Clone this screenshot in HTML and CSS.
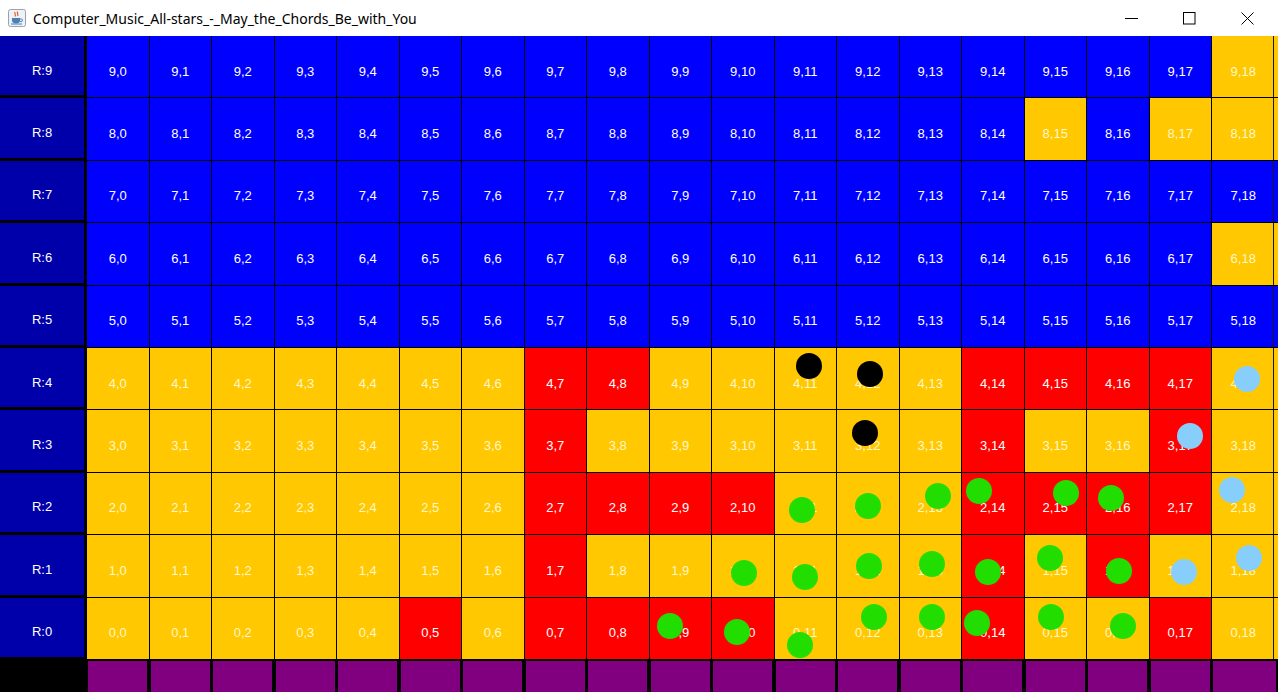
FILE: index.html
```html
<!DOCTYPE html>
<html lang="en">
<head>
	<meta charset="UTF-8">
	<title>Computer_Music_All-stars_-_May_the_Chords_Be_with_You</title>
	<link rel="stylesheet" href="styles.css">
</head>
<body>
	<div id="titlebar">
		<svg class="app-icon" width="18" height="18" viewBox="0 0 18 18">
			<rect x="0.5" y="0.5" width="17" height="17" rx="2" fill="#eef1f5" stroke="#9aa3ad"/>
			<path d="M7 3c-1 1.5 1.5 2.5 0 4.5M9.5 2.5c-1 1.5 1.5 2.5 0 4.5" stroke="#e0602a" stroke-width="1.2" fill="none"/>
			<path d="M4 9h8v2.5c0 2-1.8 3-4 3s-4-1-4-3z" fill="#4a7fb8"/>
			<path d="M12 10h1.2a1.3 1.3 0 0 1 0 2.6H11.6" stroke="#4a7fb8" stroke-width="1" fill="none"/>
			<path d="M3 15h11" stroke="#4a7fb8" stroke-width="1"/>
		</svg>
		<span class="title">Computer_Music_All-stars_-_May_the_Chords_Be_with_You</span>
		<div class="controls">
			<span><svg width="13" height="13" viewBox="0 0 13 13"><path d="M0 6.5h13" stroke="#000" stroke-width="1"/></svg></span>
			<span><svg width="13" height="13" viewBox="0 0 13 13"><rect x="0.5" y="0.5" width="11.5" height="11.5" fill="none" stroke="#000" stroke-width="1"/></svg></span>
			<span><svg width="13" height="13" viewBox="0 0 13 13"><path d="M0.5 0.5l12 12M12.5 0.5l-12 12" stroke="#000" stroke-width="1"/></svg></span>
		</div>
	</div>

	<div id="board">
		<div class="lbl">R:9</div>
		<div class="c b">9,0</div><div class="c b">9,1</div><div class="c b">9,2</div><div class="c b">9,3</div><div class="c b">9,4</div>
		<div class="c b">9,5</div><div class="c b">9,6</div><div class="c b">9,7</div><div class="c b">9,8</div><div class="c b">9,9</div>
		<div class="c b">9,10</div><div class="c b">9,11</div><div class="c b">9,12</div><div class="c b">9,13</div><div class="c b">9,14</div>
		<div class="c b">9,15</div><div class="c b">9,16</div><div class="c b">9,17</div><div class="c y">9,18</div>

		<div class="lbl">R:8</div>
		<div class="c b">8,0</div><div class="c b">8,1</div><div class="c b">8,2</div><div class="c b">8,3</div><div class="c b">8,4</div>
		<div class="c b">8,5</div><div class="c b">8,6</div><div class="c b">8,7</div><div class="c b">8,8</div><div class="c b">8,9</div>
		<div class="c b">8,10</div><div class="c b">8,11</div><div class="c b">8,12</div><div class="c b">8,13</div><div class="c b">8,14</div>
		<div class="c y">8,15</div><div class="c b">8,16</div><div class="c y">8,17</div><div class="c y">8,18</div>

		<div class="lbl">R:7</div>
		<div class="c b">7,0</div><div class="c b">7,1</div><div class="c b">7,2</div><div class="c b">7,3</div><div class="c b">7,4</div>
		<div class="c b">7,5</div><div class="c b">7,6</div><div class="c b">7,7</div><div class="c b">7,8</div><div class="c b">7,9</div>
		<div class="c b">7,10</div><div class="c b">7,11</div><div class="c b">7,12</div><div class="c b">7,13</div><div class="c b">7,14</div>
		<div class="c b">7,15</div><div class="c b">7,16</div><div class="c b">7,17</div><div class="c b">7,18</div>

		<div class="lbl">R:6</div>
		<div class="c b">6,0</div><div class="c b">6,1</div><div class="c b">6,2</div><div class="c b">6,3</div><div class="c b">6,4</div>
		<div class="c b">6,5</div><div class="c b">6,6</div><div class="c b">6,7</div><div class="c b">6,8</div><div class="c b">6,9</div>
		<div class="c b">6,10</div><div class="c b">6,11</div><div class="c b">6,12</div><div class="c b">6,13</div><div class="c b">6,14</div>
		<div class="c b">6,15</div><div class="c b">6,16</div><div class="c b">6,17</div><div class="c y">6,18</div>

		<div class="lbl">R:5</div>
		<div class="c b">5,0</div><div class="c b">5,1</div><div class="c b">5,2</div><div class="c b">5,3</div><div class="c b">5,4</div>
		<div class="c b">5,5</div><div class="c b">5,6</div><div class="c b">5,7</div><div class="c b">5,8</div><div class="c b">5,9</div>
		<div class="c b">5,10</div><div class="c b">5,11</div><div class="c b">5,12</div><div class="c b">5,13</div><div class="c b">5,14</div>
		<div class="c b">5,15</div><div class="c b">5,16</div><div class="c b">5,17</div><div class="c b">5,18</div>

		<div class="lbl">R:4</div>
		<div class="c y">4,0</div><div class="c y">4,1</div><div class="c y">4,2</div><div class="c y">4,3</div><div class="c y">4,4</div>
		<div class="c y">4,5</div><div class="c y">4,6</div><div class="c r">4,7</div><div class="c r">4,8</div><div class="c y">4,9</div>
		<div class="c y">4,10</div><div class="c y">4,11</div><div class="c y">4,12</div><div class="c y">4,13</div><div class="c r">4,14</div>
		<div class="c r">4,15</div><div class="c r">4,16</div><div class="c r">4,17</div><div class="c y">4,18</div>

		<div class="lbl">R:3</div>
		<div class="c y">3,0</div><div class="c y">3,1</div><div class="c y">3,2</div><div class="c y">3,3</div><div class="c y">3,4</div>
		<div class="c y">3,5</div><div class="c y">3,6</div><div class="c r">3,7</div><div class="c y">3,8</div><div class="c y">3,9</div>
		<div class="c y">3,10</div><div class="c y">3,11</div><div class="c y">3,12</div><div class="c y">3,13</div><div class="c r">3,14</div>
		<div class="c y">3,15</div><div class="c y">3,16</div><div class="c r">3,17</div><div class="c y">3,18</div>

		<div class="lbl">R:2</div>
		<div class="c y">2,0</div><div class="c y">2,1</div><div class="c y">2,2</div><div class="c y">2,3</div><div class="c y">2,4</div>
		<div class="c y">2,5</div><div class="c y">2,6</div><div class="c r">2,7</div><div class="c r">2,8</div><div class="c r">2,9</div>
		<div class="c r">2,10</div><div class="c y">2,11</div><div class="c y">2,12</div><div class="c y">2,13</div><div class="c r">2,14</div>
		<div class="c r">2,15</div><div class="c r">2,16</div><div class="c r">2,17</div><div class="c y">2,18</div>

		<div class="lbl">R:1</div>
		<div class="c y">1,0</div><div class="c y">1,1</div><div class="c y">1,2</div><div class="c y">1,3</div><div class="c y">1,4</div>
		<div class="c y">1,5</div><div class="c y">1,6</div><div class="c r">1,7</div><div class="c y">1,8</div><div class="c y">1,9</div>
		<div class="c y">1,10</div><div class="c y">1,11</div><div class="c y">1,12</div><div class="c y">1,13</div><div class="c r">1,14</div>
		<div class="c y">1,15</div><div class="c r">1,16</div><div class="c y">1,17</div><div class="c y">1,18</div>

		<div class="lbl">R:0</div>
		<div class="c y">0,0</div><div class="c y">0,1</div><div class="c y">0,2</div><div class="c y">0,3</div><div class="c y">0,4</div>
		<div class="c r">0,5</div><div class="c y">0,6</div><div class="c r">0,7</div><div class="c r">0,8</div><div class="c r">0,9</div>
		<div class="c r">0,10</div><div class="c y">0,11</div><div class="c y">0,12</div><div class="c y">0,13</div><div class="c r">0,14</div>
		<div class="c y">0,15</div><div class="c y">0,16</div><div class="c r">0,17</div><div class="c y">0,18</div>

		<div class="foot"></div>
		<div class="pad"><i></i></div><div class="pad"><i></i></div><div class="pad"><i></i></div><div class="pad"><i></i></div><div class="pad"><i></i></div>
		<div class="pad"><i></i></div><div class="pad"><i></i></div><div class="pad"><i></i></div><div class="pad"><i></i></div><div class="pad"><i></i></div>
		<div class="pad"><i></i></div><div class="pad"><i></i></div><div class="pad"><i></i></div><div class="pad"><i></i></div><div class="pad"><i></i></div>
		<div class="pad"><i></i></div><div class="pad"><i></i></div><div class="pad"><i></i></div><div class="pad"><i></i></div>

		<div id="dots">
			<!-- black -->
			<span class="dot k" style="left:796px;top:317px"></span>
			<span class="dot k" style="left:857px;top:325px"></span>
			<span class="dot k" style="left:852px;top:384px"></span>
			<!-- light blue -->
			<span class="dot sky" style="left:1234px;top:330px"></span>
			<span class="dot sky" style="left:1177px;top:387px"></span>
			<span class="dot sky" style="left:1219px;top:441px"></span>
			<span class="dot sky" style="left:1236px;top:509px"></span>
			<span class="dot sky" style="left:1171px;top:523px"></span>
			<!-- green -->
			<span class="dot g" style="left:789px;top:461px"></span>
			<span class="dot g" style="left:855px;top:457px"></span>
			<span class="dot g" style="left:925px;top:447px"></span>
			<span class="dot g" style="left:966px;top:442px"></span>
			<span class="dot g" style="left:1053px;top:444px"></span>
			<span class="dot g" style="left:1098px;top:449px"></span>
			<span class="dot g" style="left:731px;top:524px"></span>
			<span class="dot g" style="left:792px;top:528px"></span>
			<span class="dot g" style="left:856px;top:517px"></span>
			<span class="dot g" style="left:919px;top:515px"></span>
			<span class="dot g" style="left:975px;top:523px"></span>
			<span class="dot g" style="left:1037px;top:509px"></span>
			<span class="dot g" style="left:1106px;top:522px"></span>
			<span class="dot g" style="left:657px;top:577px"></span>
			<span class="dot g" style="left:724px;top:583px"></span>
			<span class="dot g" style="left:787px;top:596px"></span>
			<span class="dot g" style="left:861px;top:568px"></span>
			<span class="dot g" style="left:919px;top:568px"></span>
			<span class="dot g" style="left:964px;top:574px"></span>
			<span class="dot g" style="left:1038px;top:568px"></span>
			<span class="dot g" style="left:1110px;top:577px"></span>
		</div>
	</div>
</body>
</html>
```

FILE: styles.css
```css
*{
	margin:0;
	padding:0;
	box-sizing:border-box;
}
body{
	width:1278px;
	height:692px;
	overflow:hidden;
	background:#fff;
	font-family:"Liberation Sans",Arial,sans-serif;
}
#titlebar{
	display:flex;
	align-items:center;
	height:36px;
	background:#fff;
}
.app-icon{
	margin-left:8px;
}
.title{
	margin-left:7px;
	font-family:"Noto Sans","Segoe UI",sans-serif;
	font-size:14px;
	color:#000;
}
.controls{
	display:flex;
	margin-left:auto;
	margin-right:2px;
}
.controls span{
	display:flex;
	align-items:center;
	justify-content:center;
	width:58px;
	height:36px;
}
#board{
	position:relative;
	display:grid;
	grid-template-columns:87px repeat(18,62.5px) 1fr;
	grid-template-rows:repeat(10,62.4px) 40px;
	background:#000;
}
.lbl{
	display:flex;
	align-items:center;
	justify-content:center;
	padding-top:9px;
	background:#0000aa;
	border-right:3px solid #000;
	border-bottom:3px solid #000;
	color:#fff;
	font-size:13px;
}
.c{
	display:flex;
	align-items:center;
	justify-content:center;
	padding-top:9px;
	border-right:1px solid #000;
	border-bottom:1px solid #000;
	color:#fff;
	font-size:13px;
}
/* last column runs to the window edge, its line sits at 62px */
.c:nth-child(20n){
	border-right:0;
	padding-right:3.5px;
	background-image:linear-gradient(90deg,transparent 61.5px,#1a1a1a 61.5px,#1a1a1a 62.5px,transparent 62.5px);
}
.b{
	background-color:#0000ff;
}
.y{
	background-color:#ffc800;
	color:#fff7cc;
}
.r{
	background-color:#ff0000;
}
.foot{
	background:#000;
}
.pad{
	padding:1px 2.5px 0 1px;
}
.pad i{
	display:block;
	height:100%;
	background:#800080;
}
#dots{
	position:absolute;
	left:0;
	top:0;
	right:0;
	bottom:0;
	pointer-events:none;
}
.dot{
	position:absolute;
	width:26px;
	height:26px;
	border-radius:50%;
}
.g{
	background:#22dd00;
}
.k{
	background:#000;
}
.sky{
	background:#87cefa;
}
```
